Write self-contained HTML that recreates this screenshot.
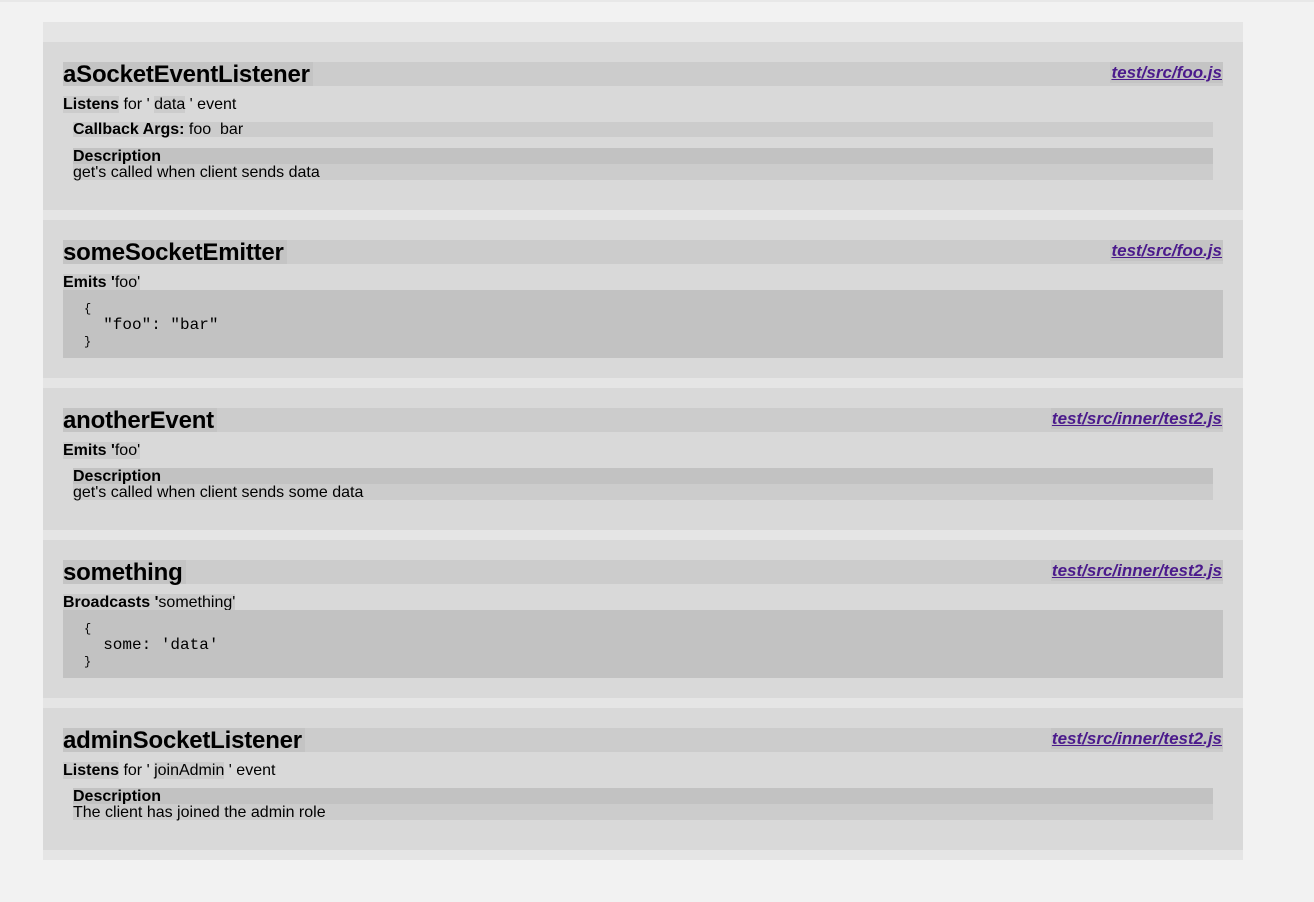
<!DOCTYPE html>
<html><head><meta charset="utf-8"><style>
*{margin:0;padding:0;box-sizing:border-box}
body{width:1314px;height:902px;background:#f2f2f2;font-family:"Liberation Sans",Arial,sans-serif;color:#000;position:relative;overflow:hidden}
.a{position:absolute}
.topl{left:0;top:0;width:1314px;height:2px;background:#e8e8e8}
.outer{left:43px;top:22px;width:1200px;height:838px;background:#e5e5e5}
.card{left:43px;width:1200px;background:#d9d9d9}
.bar{left:63px;width:1160px;height:24px;background:#cccccc}
.title{left:63px;height:24px;line-height:26px;font-size:24px;font-weight:bold;background:#c4c4c4;padding-right:3px;letter-spacing:-0.2px}
.link{right:91px;height:21px;line-height:21px;font-size:17px;font-weight:bold;font-style:italic;color:#4b1a8c;text-decoration:underline;background:#c4c4c4;padding:0 1px}
.line{left:63px;height:17px;line-height:19px;font-size:16px}
.hl{background:#cccccc}
.box{left:73px;width:1140px;height:16px;line-height:17px;font-size:16px}
.dh{background:#c2c2c2;font-weight:bold}
.dt{background:#cccccc}
.code{left:63px;width:1160px;height:68px;background:#c2c2c2;font-family:"Liberation Mono",monospace;font-size:16px;line-height:16px;padding:10px 0 0 21px;white-space:pre}
.code .b{font-size:12px}
</style></head><body>
<div class="a topl"></div>
<div class="a outer"></div>

<div class="a card" style="top:42px;height:168px"></div>
<div class="a bar" style="top:62px"></div>
<div class="a title" style="top:62px">aSocketEventListener</div>
<div class="a link" style="top:62px">test/src/foo.js</div>
<div class="a line" style="top:95px"><b class="hl">Listens</b> for ' <span class="hl">data</span> ' event</div>
<div class="a box" style="top:122px;background:#cccccc;height:15px;line-height:16px"><b>Callback Args:</b> foo&nbsp; bar</div>
<div class="a box dh" style="top:148px">Description</div>
<div class="a box dt" style="top:164px">get's called when client sends data</div>

<div class="a card" style="top:220px;height:158px"></div>
<div class="a bar" style="top:240px"></div>
<div class="a title" style="top:240px">someSocketEmitter</div>
<div class="a link" style="top:240px">test/src/foo.js</div>
<div class="a line" style="top:273px"><span class="hl"><b>Emits</b> <b>'</b>foo'</span></div>
<div class="a code" style="top:290px"><span class="b">{</span>
  "foo": "bar"
<span class="b">}</span></div>

<div class="a card" style="top:388px;height:142px"></div>
<div class="a bar" style="top:408px"></div>
<div class="a title" style="top:408px">anotherEvent</div>
<div class="a link" style="top:408px">test/src/inner/test2.js</div>
<div class="a line" style="top:441px"><span class="hl"><b>Emits</b> <b>'</b>foo'</span></div>
<div class="a box dh" style="top:468px">Description</div>
<div class="a box dt" style="top:484px">get's called when client sends some data</div>

<div class="a card" style="top:540px;height:158px"></div>
<div class="a bar" style="top:560px"></div>
<div class="a title" style="top:560px">something</div>
<div class="a link" style="top:560px">test/src/inner/test2.js</div>
<div class="a line" style="top:593px"><span class="hl"><b>Broadcasts</b> <b>'</b>something'</span></div>
<div class="a code" style="top:610px"><span class="b">{</span>
  some: 'data'
<span class="b">}</span></div>

<div class="a card" style="top:708px;height:142px"></div>
<div class="a bar" style="top:728px"></div>
<div class="a title" style="top:728px">adminSocketListener</div>
<div class="a link" style="top:728px">test/src/inner/test2.js</div>
<div class="a line" style="top:761px"><b class="hl">Listens</b> for ' <span class="hl">joinAdmin</span> ' event</div>
<div class="a box dh" style="top:788px">Description</div>
<div class="a box dt" style="top:804px">The client has joined the admin role</div>
</body></html>
